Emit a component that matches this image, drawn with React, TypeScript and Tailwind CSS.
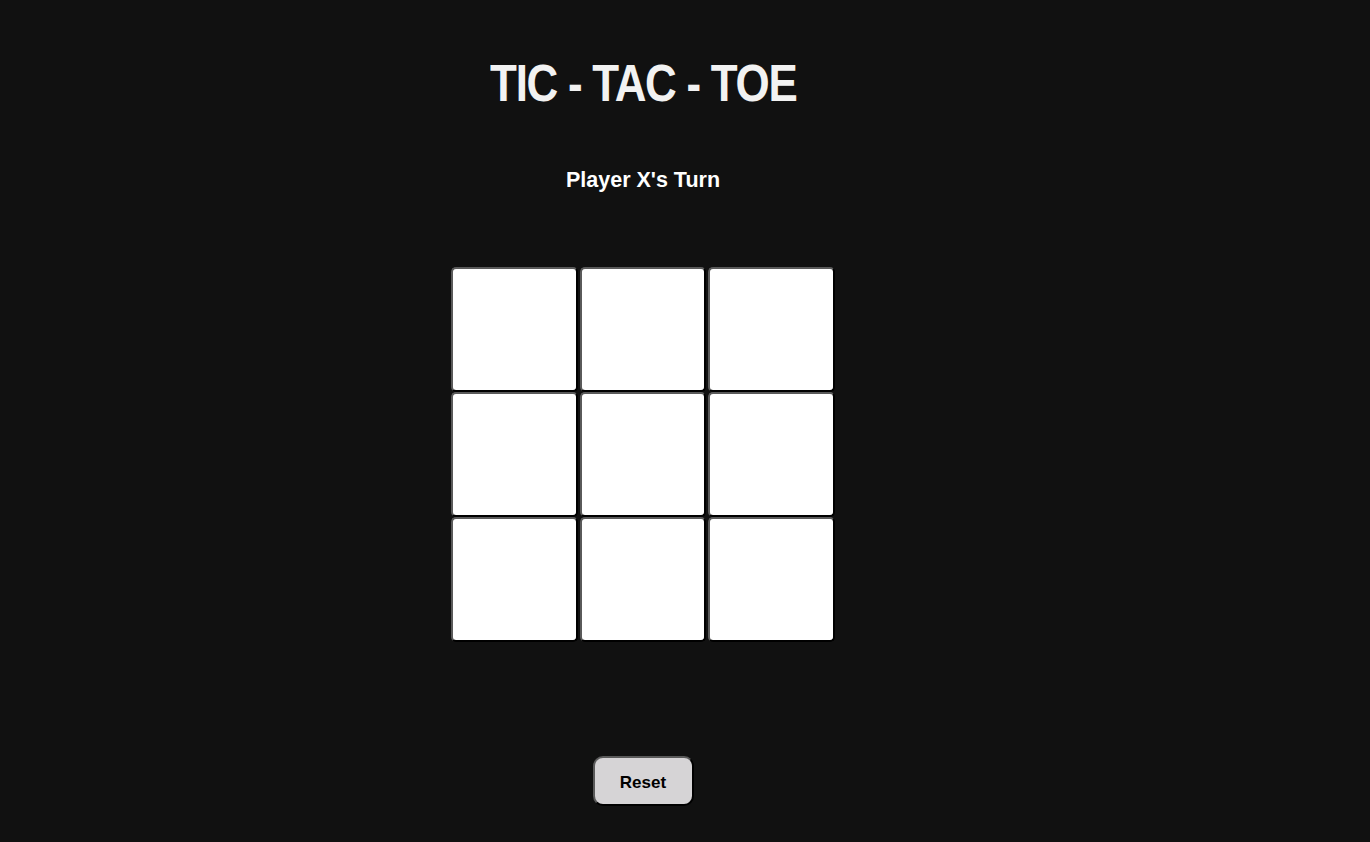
import { useState } from "react";

export default function App() {
  const [cells, setCells] = useState<string[]>(Array(9).fill(""));
  const [xTurn, setXTurn] = useState(true);

  const play = (i: number) => {
    if (cells[i]) return;
    const next = [...cells];
    next[i] = xTurn ? "X" : "O";
    setCells(next);
    setXTurn(!xTurn);
  };

  const reset = () => {
    setCells(Array(9).fill(""));
    setXTurn(true);
  };

  return (
    <div className="min-h-[842px] bg-[#111111] font-['Liberation_Sans',Arial,sans-serif] pr-[84px]">
      <div className="flex flex-col items-center">
        <h1 className="mt-[53px] text-[52px] leading-[60px] font-bold tracking-[-1.5px] text-[#f2f2f2] scale-x-[0.845] whitespace-nowrap">
          TIC - TAC - TOE
        </h1>

        <p className="mt-[54px] text-[21.5px] leading-[26px] font-bold text-white">
          Player {xTurn ? "X" : "O"}&apos;s Turn
        </p>

        {/* Board */}
        <div className="mt-[74px] grid grid-cols-[127px_126px_127px] gap-x-[2px] gap-y-0">
          {cells.map((c, i) => (
            <button
              key={i}
              onClick={() => play(i)}
              className="w-full h-[125px] bg-white rounded-[5px] border-2 border-solid border-t-[#5a5a5a] border-l-[#5a5a5a] border-r-black border-b-black text-[64px] font-bold text-[#111111]"
            >
              {c}
            </button>
          ))}
        </div>

        <button
          onClick={reset}
          className="mt-[114px] w-[101px] h-[50px] pt-[4px] bg-[#d6d4d6] rounded-[10px] border-2 border-solid border-t-[#5a5a5a] border-l-[#5a5a5a] border-r-black border-b-black text-[17px] font-bold text-black"
        >
          Reset
        </button>
      </div>
    </div>
  );
}
